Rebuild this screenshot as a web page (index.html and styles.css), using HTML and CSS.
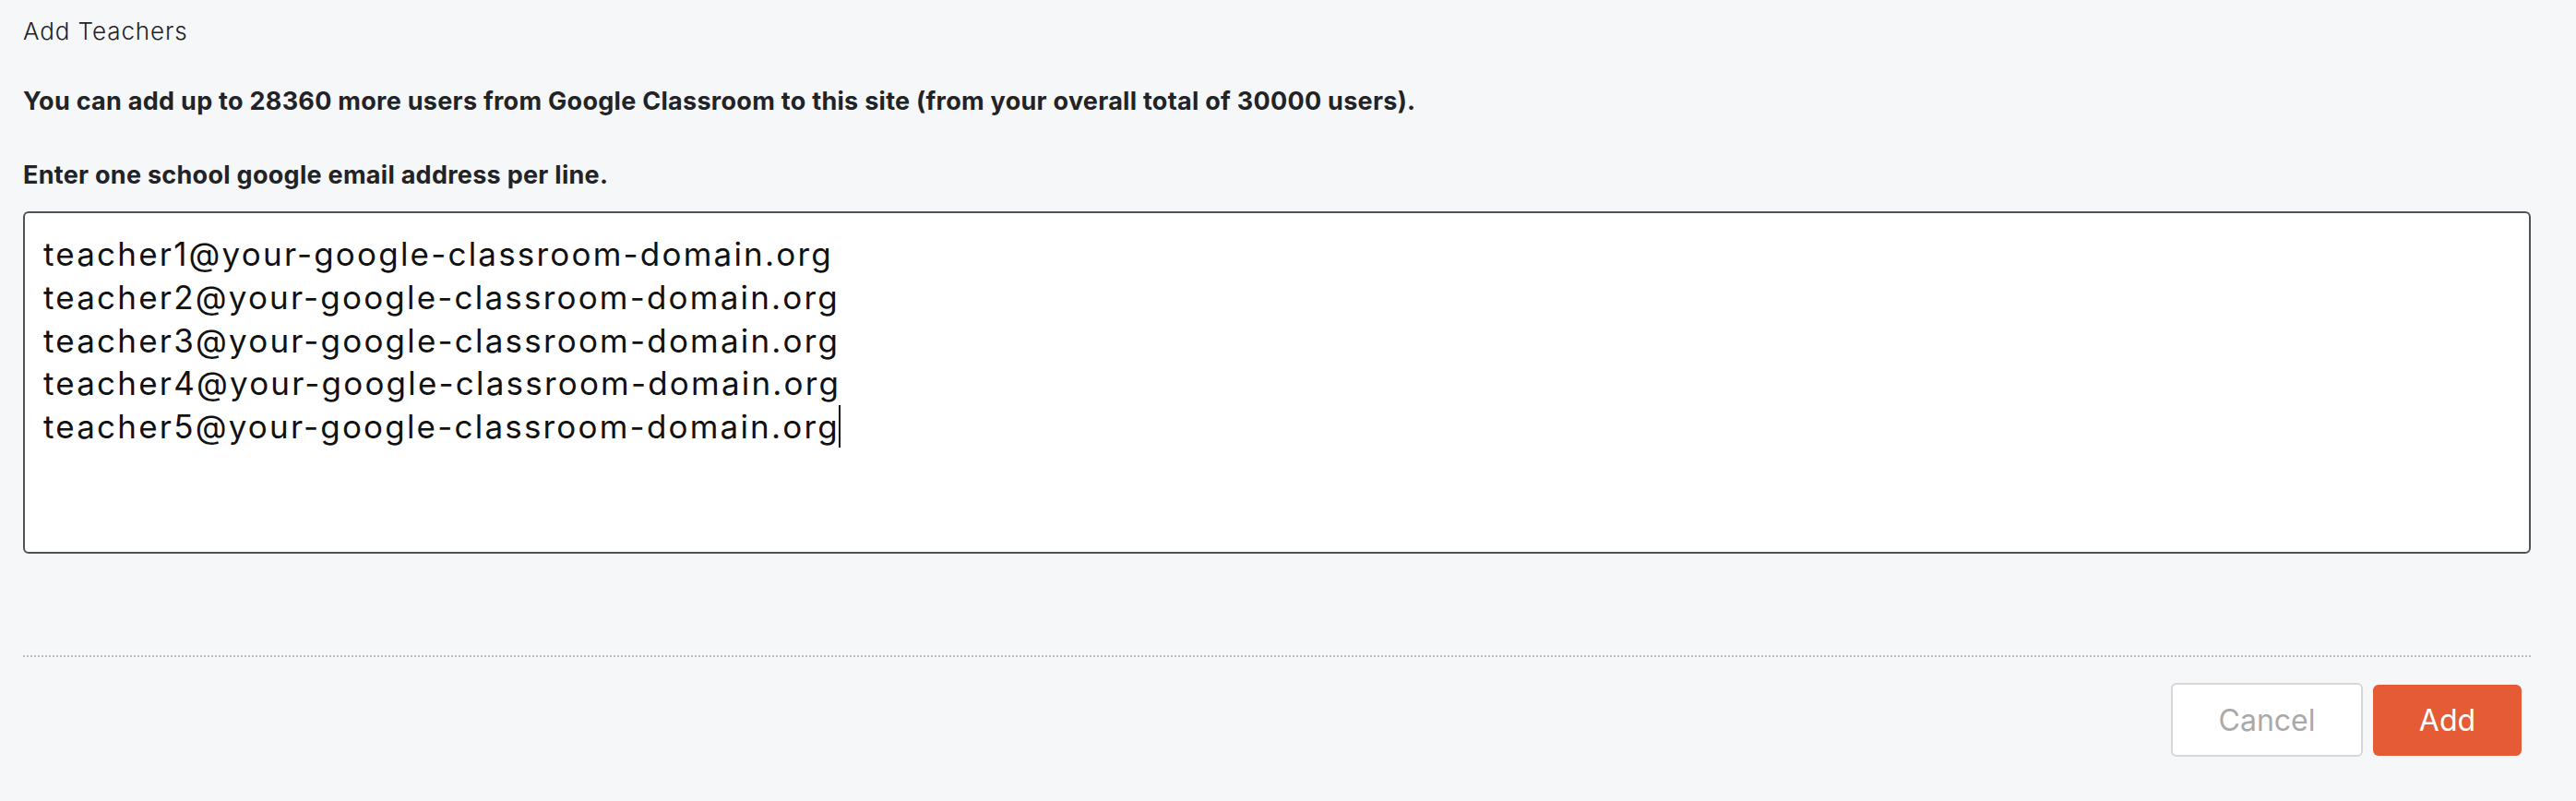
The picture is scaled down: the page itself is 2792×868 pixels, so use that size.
FILE: index.html
```html
<!DOCTYPE html>
<html lang="en">
<head>
<meta charset="utf-8">
<title>Add Teachers</title>
<link rel="stylesheet" href="styles.css">
</head>
<body>
<main class="page">
  <h1 class="title">Add Teachers</h1>
  <p class="quota">You can add up to 28360 more users from Google Classroom to this site (from your overall total of 30000 users).</p>
  <p class="hint">Enter one school google email address per line.</p>
  <div class="emails" role="textbox" aria-multiline="true">
    <div class="line">teacher1@your-google-classroom-domain.org</div>
    <div class="line">teacher2@your-google-classroom-domain.org</div>
    <div class="line">teacher3@your-google-classroom-domain.org</div>
    <div class="line">teacher4@your-google-classroom-domain.org</div>
    <div class="line">teacher5@your-google-classroom-domain.org<span class="caret"></span></div>
  </div>
  <div class="footer">
    <button class="btn btn-cancel" type="button">Cancel</button>
    <button class="btn btn-add" type="button">Add</button>
  </div>
</main>
</body>
</html>
```
FILE: styles.css
```css
html, body {
  margin: 0;
  padding: 0;
  background: #f6f7f9;
}

.page {
  box-sizing: border-box;
  width: 2792px;
  height: 868px;
  padding: 18px 49px 0 25px;
  font-family: Inter, "Liberation Sans", sans-serif;
  color: #222326;
  display: flex;
  flex-direction: column;
}

.title {
  margin: 0;
  font-size: 26px;
  font-weight: 300;
  line-height: 32px;
  letter-spacing: 0.9px;
}

.quota {
  margin: 44px 0 0;
  font-size: 27px;
  font-weight: 700;
  line-height: 32px;
  letter-spacing: 0.28px;
}

.hint {
  margin: 48px 0 0;
  font-size: 27px;
  font-weight: 700;
  line-height: 32px;
  letter-spacing: 0.28px;
}

.emails {
  box-sizing: border-box;
  margin-top: 23px;
  height: 371px;
  background: #ffffff;
  border: 2px solid #50525a;
  border-radius: 6px;
  padding: 21px 20px;
  font-size: 35px;
  line-height: 46.75px;
  letter-spacing: 2.2px;
  color: #111;
}

.caret {
  display: inline-block;
  width: 2px;
  height: 46px;
  background: #111;
  vertical-align: -10px;
  margin-left: -1px;
}

.footer {
  margin-top: 110px;
  border-top: 2px dotted #bcbcbe;
  padding: 28px 10px 0 0;
  display: flex;
  justify-content: flex-end;
  align-items: center;
  gap: 11px;
}

.btn {
  box-sizing: border-box;
  font-family: Inter, "Liberation Sans", sans-serif;
  font-size: 32px;
  font-weight: 400;
  border-radius: 6px;
  cursor: pointer;
}

.btn-cancel {
  width: 208px;
  height: 80px;
  background: #ffffff;
  border: 2px solid #d6d6d8;
  color: #a9a9ab;
}

.btn-add {
  width: 161px;
  height: 77px;
  background: #e45b36;
  border: none;
  color: #ffffff;
}
```
